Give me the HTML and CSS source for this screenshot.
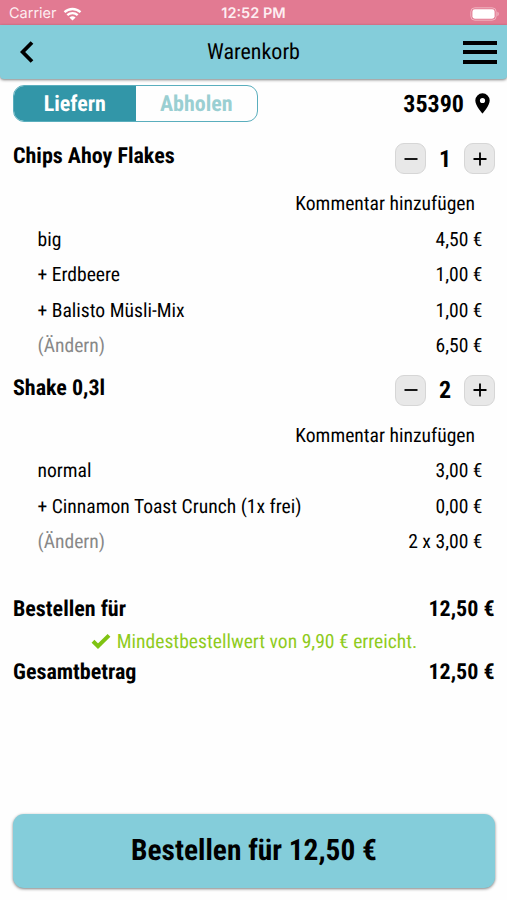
FILE: index.html
```html
<!DOCTYPE html>
<html lang="de">

<head>
    <meta charset="UTF-8">
    <meta name="viewport" content="width=device-width, initial-scale=1.0">
    <title>Warenkorb</title>
    <link rel="stylesheet" href="styles.css">
</head>

<body>
    <!-- Status Bar -->
    <div class="status-bar">
        <div class="carrier">
            <span>Carrier</span>
            <svg width="19" height="14" viewBox="0 0 18 14">
                <path d="M1 5.2a11.6 11.6 0 0 1 16 0" />
                <path d="M3.8 8.1a7.6 7.6 0 0 1 10.4 0" />
                <path class="dot" d="M9 13.6L5.9 10.6a4.5 4.5 0 0 1 6.2 0z" />
            </svg>
        </div>
        <span class="time">12:52 PM</span>
        <div class="battery">
            <svg width="30" height="14" viewBox="0 0 30 14">
                <rect class="outline" x="0.8" y="0.8" width="25.4" height="12.4" rx="4" />
                <rect class="level" x="2.4" y="2.3" width="22.2" height="9.4" rx="2.4" />
                <path class="cap" d="M27.4 4.8a2.4 2.4 0 0 1 0 4.4z" />
            </svg>
        </div>
    </div>

    <!-- Header -->
    <header>
        <svg class="back" width="14" height="22" viewBox="0 0 14 22">
            <path d="M12 1.5L2.6 11L12 20.5" />
        </svg>
        <h1>Warenkorb</h1>
        <div class="menu">
            <span></span>
            <span></span>
            <span></span>
        </div>
    </header>

    <main>
        <div class="delivery">
            <div class="toggle">
                <div class="option active">Liefern</div>
                <div class="option">Abholen</div>
            </div>
            <div class="zip">
                <span>35390</span>
                <svg width="15" height="21" viewBox="0 0 15 21">
                    <path d="M7.5 0.3A7.2 7.2 0 0 0 0.3 7.5C0.3 12.6 7.5 20.6 7.5 20.6S14.7 12.6 14.7 7.5A7.2 7.2 0 0 0 7.5 0.3zM7.5 10.1a2.6 2.6 0 1 1 0-5.2a2.6 2.6 0 0 1 0 5.2z" />
                </svg>
            </div>
        </div>

        <!-- Cart Items -->
        <section class="item">
            <div class="item-head">
                <h2>Chips Ahoy Flakes</h2>
                <div class="stepper">
                    <button><svg width="14" height="14" viewBox="0 0 14 14"><path d="M0.5 7h13" /></svg></button>
                    <span>1</span>
                    <button><svg width="14" height="14" viewBox="0 0 14 14"><path d="M0.5 7h13M7 0.5v13" /></svg></button>
                </div>
            </div>
            <div class="comment">Kommentar hinzufügen</div>
            <div class="line"><span>big</span><span>4,50 €</span></div>
            <div class="line"><span>+ Erdbeere</span><span>1,00 €</span></div>
            <div class="line"><span>+ Balisto Müsli-Mix</span><span>1,00 €</span></div>
            <div class="line"><span class="change">(Ändern)</span><span>6,50 €</span></div>
        </section>

        <section class="item">
            <div class="item-head">
                <h2>Shake 0,3l</h2>
                <div class="stepper">
                    <button><svg width="14" height="14" viewBox="0 0 14 14"><path d="M0.5 7h13" /></svg></button>
                    <span>2</span>
                    <button><svg width="14" height="14" viewBox="0 0 14 14"><path d="M0.5 7h13M7 0.5v13" /></svg></button>
                </div>
            </div>
            <div class="comment">Kommentar hinzufügen</div>
            <div class="line"><span>normal</span><span>3,00 €</span></div>
            <div class="line"><span>+ Cinnamon Toast Crunch (1x frei)</span><span>0,00 €</span></div>
            <div class="line"><span class="change">(Ändern)</span><span>2 x 3,00 €</span></div>
        </section>

        <!-- Totals -->
        <section class="totals">
            <div class="total"><span>Bestellen für</span><span>12,50 €</span></div>
            <div class="minimum">
                <svg width="20" height="16" viewBox="0 0 20 16">
                    <path d="M2 8.3L7 13.2L18 2.4" />
                </svg>
                <span>Mindestbestellwert von 9,90 € erreicht.</span>
            </div>
            <div class="total"><span>Gesamtbetrag</span><span>12,50 €</span></div>
        </section>
    </main>

    <button class="order-btn">Bestellen für 12,50 €</button>
</body>

</html>
```
FILE: styles.css
```css
/* General Styles */
* {
    box-sizing: border-box;
}

body {
    margin: 0;
    height: 900px;
    display: flex;
    flex-direction: column;
    font-family: 'Roboto Condensed', Roboto, sans-serif;
    font-stretch: 75%;
    font-size: 19.6px;
    text-rendering: geometricPrecision;
    background: #fefefe;
    color: #000;
    overflow: hidden;
}

/* Status Bar */
.status-bar {
    display: grid;
    grid-template-columns: 1fr auto 1fr;
    align-items: center;
    height: 25px;
    padding: 2px 7px 0 9px;
    background: #e27a92;
    color: #fdeef1;
    font-family: Inter, sans-serif;
    font-stretch: normal;
    font-size: 14.5px;
}

.carrier {
    display: flex;
    align-items: center;
    gap: 6px;
}

.carrier path {
    fill: none;
    stroke: #fff;
    stroke-width: 2.3;
}

.carrier .dot {
    fill: #fff;
    stroke: none;
}

.time {
    padding-right: 2px;
    font-size: 14.5px;
    font-weight: 600;
}

.battery {
    display: flex;
    justify-content: flex-end;
}

.battery .outline {
    fill: none;
    stroke: #f0b4c1;
}

.battery .level {
    fill: #fff;
}

.battery .cap {
    fill: #f0b4c1;
}

/* Header */
header {
    display: grid;
    grid-template-columns: 1fr auto 1fr;
    align-items: center;
    height: 54px;
    padding: 0 10px;
    background: #84cdda;
    border-radius: 0 0 4px 4px;
    box-shadow: 0 1px 3px rgba(0, 0, 0, 0.5);
}

h1 {
    margin: 0;
    font-size: 22px;
    font-weight: 400;
}

.back {
    margin-left: 10px;
}

.back path {
    fill: none;
    stroke: #000;
    stroke-width: 3.8;
}

.menu {
    justify-self: end;
    display: flex;
    flex-direction: column;
    gap: 5.5px;
    width: 34px;
}

.menu span {
    height: 4px;
    background: #000;
}

/* Delivery Toggle */
main {
    padding: 6px 12px 0 13px;
}

.delivery {
    display: flex;
    justify-content: space-between;
    height: 37px;
    margin-bottom: 18px;
}

.toggle {
    display: flex;
    width: 245px;
    border: 1.5px solid #5aaebd;
    border-radius: 11px;
    overflow: hidden;
}

.option {
    flex: 1;
    text-align: center;
    line-height: 37px;
    font-size: 22px;
    font-weight: 700;
    color: #9acfd2;
}

.option.active {
    background: #3296a8;
    color: #fff;
}

.zip {
    display: flex;
    align-items: center;
    gap: 11px;
    padding-right: 5px;
    font-size: 24px;
    font-weight: 700;
}

/* Cart Items */
.item {
    padding-bottom: 8px;
}

.item-head {
    display: flex;
    justify-content: space-between;
    height: 46px;
    padding-top: 3px;
}

h2 {
    margin: 0;
    font-size: 22px;
    font-weight: 700;
    line-height: 28px;
}

.stepper {
    display: flex;
    align-items: center;
    height: 31px;
}

.stepper button {
    display: flex;
    align-items: center;
    justify-content: center;
    width: 31px;
    height: 31px;
    padding: 0;
    border: 1px solid #d6d6d6;
    border-radius: 9px;
    background: #e8e8e8;
}

.stepper path {
    stroke: #000;
    stroke-width: 1.8;
}

.stepper span {
    width: 38px;
    text-align: center;
    font-size: 24px;
    font-weight: 700;
}

.comment {
    padding-right: 20px;
    text-align: right;
    line-height: 35.5px;
}

.line {
    display: flex;
    justify-content: space-between;
    padding: 0 12.5px 0 24.5px;
    line-height: 35.5px;
}

.change {
    color: #888;
}

/* Totals */
.totals {
    padding-top: 26px;
}

.total {
    display: flex;
    justify-content: space-between;
    padding-right: 0.5px;
    font-size: 22px;
    font-weight: 700;
    line-height: 32px;
}

.minimum {
    display: flex;
    justify-content: center;
    align-items: center;
    gap: 6px;
    line-height: 31px;
    color: #8fcb1d;
}

.minimum path {
    fill: none;
    stroke: #7fc312;
    stroke-width: 4;
}

/* Order Button */
.order-btn {
    height: 74px;
    margin: auto 12px 12px 13px;
    padding-bottom: 1px;
    border: none;
    border-radius: 11px;
    background: #84cdda;
    color: #000;
    font-family: inherit;
    font-stretch: inherit;
    font-size: 29.4px;
    font-weight: 700;
    text-rendering: inherit;
    box-shadow: 0 1px 3px rgba(0, 0, 0, 0.5);
}
```
